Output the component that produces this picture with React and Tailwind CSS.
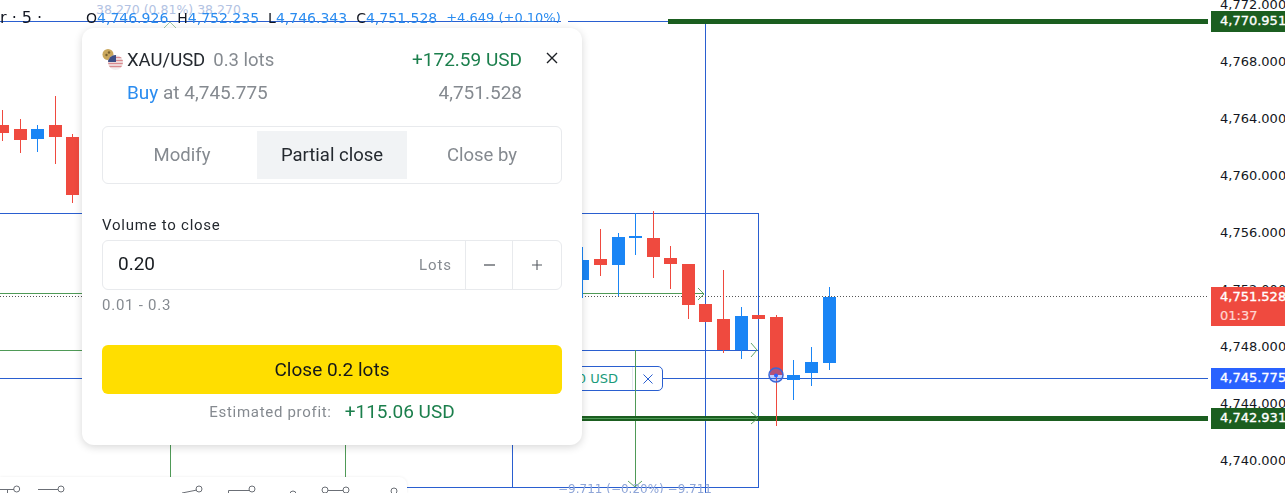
import React from "react";

const R = "#ef4a3f";
const B = "#1a85f5";
const candles = [
  [-4, 125, 133, 110, 141, R], [14, 129, 140, 119, 153, R], [31, 129, 139, 125, 152, B], [49, 125, 137, 96, 164, R], [66, 137, 195, 134, 203, R],
  [576, 260, 280, 247, 298, B], [594, 259, 265, 229, 276, R], [612, 237, 265, 233, 296, B], [629, 236, 238, 213, 255, B], [647, 238, 257, 211, 278, R],
  [664, 258, 264, 246, 289, R], [682, 264, 305, 264, 319, R], [699, 304, 322, 304, 322, R], [717, 319, 350, 270, 353, R], [735, 316, 350, 307, 359, B],
  [752, 315, 319, 315, 319, R], [770, 317, 375, 315, 426, R], [787, 375, 380, 360, 400, B], [805, 362, 373, 347, 386, B], [823, 297, 363, 287, 370, B],
];

function Chart() {
  const blue = "#2a5fd0";
  const green = "#4f9a57";
  const dark = "#1b5e20";
  return (
    <svg className="absolute inset-0" width="1285" height="493" shapeRendering="crispEdges">
      <g stroke={blue} fill="none">
        <path d="M0 21.5H561M568 21.5H668" />
        <path d="M705.5 21V493" />
        <path d="M0 213.5H758.5V487.5H407M512.5 440V487" />
        <path d="M582 350.5H758M0 378.5H90M580 378.5H1208" />
      </g>
      <g stroke={green} fill="none">
        <path d="M0 293.5H704M0 350.5H90M635.5 350V486M170.5 440V478M345.5 440V478" />
      </g>
      <g fill={dark} stroke="none">
        <rect x="668" y="19" width="540" height="5" />
        <rect x="580" y="416" width="628" height="5" />
      </g>
      <path d="M0 296.5H1208" stroke="#555" strokeDasharray="1 2" />
      <path d="M580 418.500H758" stroke={green} />
      <g shapeRendering="auto" stroke={green} fill="none" opacity="0.9">
        <path d="M698 288l6 6-6 6M751 343l6 7-6 7M751 412l7 6-7 6M628 481l7 6 7-6" />
        <path d="M164 28l6-6 6 6" opacity="0.6" />
      </g>
      {candles.map(([x, top, bot, wt, wb, c], i) => (
        <g key={i} fill={c} stroke="none">
          <rect x={x + 6} y={wt} width="1" height={wb - wt} />
          <rect x={x} y={top} width="13" height={bot - top} />
        </g>
      ))}
      <g shapeRendering="auto">
        <circle cx="776" cy="375" r="7" fill="#2962ff" fillOpacity="0.3" stroke="#3a66d8" strokeWidth="1.5" />
        <circle cx="776" cy="375.5" r="2" fill="#2962ff" />
      </g>
    </svg>
  );
}

function PriceLabel({ top, h, bg, children }) {
  return (
    <div
      className="absolute left-[1211px] w-[74px] pl-[9px] overflow-hidden text-[13px] leading-[20px] text-white whitespace-nowrap [-webkit-text-stroke:0.35px_white]"
      style={{ top, height: h, background: bg }}
    >
      {children}
    </div>
  );
}

function Flag() {
  return (
    <svg width="22" height="24" viewBox="0 0 22 24" className="shrink-0">
      <circle cx="6" cy="6.500" r="5.5" fill="#c9a75c" />
      <circle cx="4.500" cy="7" r="1.2" fill="#7a6230" />
      <circle cx="7" cy="4.500" r="1.2" fill="#7a6230" />
      <defs>
        <clipPath id="fc"><circle cx="13.500" cy="14.500" r="7.500" /></clipPath>
      </defs>
      <g clipPath="url(#fc)">
        <rect x="6" y="7" width="15" height="15" fill="#f3eeee" />
        <path d="M6 9.500h15M6 12.500h15M6 15.500h15M6 18.500h15" stroke="#d98a8f" strokeWidth="1.4" />
        <rect x="6" y="7" width="8" height="7" fill="#3d4f86" />
      </g>
    </svg>
  );
}

function Modal() {
  return (
    <div
      className="absolute left-[82px] top-[28px] w-[500px] h-[417px] rounded-xl bg-white shadow-[0_2px_8px_rgba(0,0,0,0.16)] px-5 pt-5 text-[18.5px] leading-6"
      style={{ fontFamily: "Roboto, sans-serif" }}
    >
      <div className="flex items-start h-[78px] relative">
        <div className="w-[25px]"><Flag /></div>
        <div className="flex-1">
          <div className="flex justify-between h-[24px] w-[395px]">
            <div>
              <span className="text-[#24292f]">XAU/USD</span>
              <span className="text-[#858a90] ml-2">0.3 lots</span>
            </div>
            <span className="text-[#1b7f4c] text-[19px]">+172.59 USD</span>
          </div>
          <div className="flex justify-between mt-[9px] w-[395px] text-[#858a90] text-[19px]">
            <div>
              <span className="text-[#2a8cf0]">Buy</span> at 4,745.775
            </div>
            <span>4,751.528</span>
          </div>
        </div>
        <svg width="12" height="12" viewBox="0 0 12 12" className="absolute right-[4px] top-[4px]">
          <path d="M1 1l10 10M11 1L1 11" stroke="#1c1f24" strokeWidth="1.4" />
        </svg>
      </div>

      <div className="flex h-[58px] border border-[#e8eaed] rounded-md p-1 text-center">
        <div className="flex-1 flex items-center justify-center text-[#858a90]">Modify</div>
        <div className="flex-1 flex items-center justify-center text-[#24292f] bg-[#f1f3f5]">Partial close</div>
        <div className="flex-1 flex items-center justify-center text-[#858a90]">Close by</div>
      </div>

      <div className="mt-[31px] text-[15px] leading-5 tracking-[0.75px] text-[#24292f]">Volume to close</div>
      <div className="flex items-center h-[50px] mt-[5px] border border-[#e8eaed] rounded-md">
        <div className="flex-1 pl-[15px] pb-[2px] text-[#181c20] text-[19px]">0.20</div>
        <div className="pr-[13px] text-[15px] tracking-[0.9px] text-[#858a90]">Lots</div>
        <div className="w-[47px] h-full border-l border-[#e8eaed] flex items-center justify-center">
          <svg width="11" height="12" viewBox="0 0 11 12"><path d="M0 6h11" stroke="#555a60" strokeWidth="1.3" /></svg>
        </div>
        <div className="w-[49px] h-full border-l border-[#e8eaed] flex items-center justify-center">
          <svg width="10" height="10" viewBox="0 0 10 10"><path d="M0 5h10M5 0v10" stroke="#555a60" strokeWidth="1.1" /></svg>
        </div>
      </div>
      <div className="mt-[5px] text-[15px] leading-5 tracking-[0.75px] text-[#858a90]">0.01 - 0.3</div>

      <div className="mt-[30px] h-[49px] rounded-md bg-[#ffde00] flex items-center justify-center text-[#14171a] text-[19px]">Close 0.2 lots</div>
      <div className="mt-[6px] flex items-center justify-center gap-[13px]">
        <span className="text-[15px] tracking-[0.7px] text-[#858a90]">Estimated profit:</span>
        <span className="text-[#1b7f4c] text-[19px]">+115.06 USD</span>
      </div>
    </div>
  );
}

function Toolbar() {
  return (
    <div className="absolute left-0 top-[477px] w-[407px] h-[16px] bg-white rounded-tr-lg shadow-[0_0_3px_rgba(0,0,0,0.08)] overflow-hidden">
      <svg width="407" height="16" fill="none" stroke="#6b6f76" strokeWidth="1">
        <path d="M0 12.500H14M7.500 12.500V16" />
        <circle cx="16.700" cy="12" r="3" />
        <path d="M38 12.500H58" />
        <circle cx="61" cy="12" r="3" />
        <path d="M182 16L197 13" />
        <circle cx="199" cy="12" r="3" />
        <path d="M228.500 16V13.500H250" />
        <circle cx="252" cy="12" r="3" />
        <circle cx="293" cy="17" r="3" />
        <circle cx="325" cy="13" r="3" />
        <path d="M328 13.500H343" />
        <circle cx="346" cy="13" r="3" />
        <circle cx="394" cy="14" r="3" />
      </svg>
    </div>
  );
}

const legend = [
  ["O", "4,746.926"],
  ["H", "4,752.235"],
  ["L", "4,746.343"],
  ["C", "4,751.528"],
];

const axis = ["4,772.000", "4,768.000", "4,764.000", "4,760.000", "4,756.000", "4,752.000", "4,748.000", "4,744.000", "4,740.000"];

export default function App() {
  return (
    <div className="relative w-[1285px] h-[493px] overflow-hidden bg-white" style={{ fontFamily: "'DejaVu Sans', sans-serif" }}>
      <Chart />

      <div className="absolute left-[96px] top-[2px] text-[12.500px] leading-4 text-[#9fb4dc] opacity-80 whitespace-nowrap">38.270 (0.81%) 38.270</div>

      <div className="absolute left-0 top-[9px] flex items-center h-[18px] whitespace-nowrap">
        <div className="w-[86px] text-[16px] leading-5 -mt-[1px] text-[#131722]">r · 5 ·</div>
        <div className="flex items-center gap-[9px] text-[14px] leading-[18px] text-[#2a8cf0]">
          {legend.map(([k, v]) => (
            <div key={k}>
              <span className="text-[#131722]">{k}</span>
              {v}
            </div>
          ))}
          <div className="text-[13px]">+4.649 (+0.10%)</div>
        </div>
      </div>

      <div className="absolute left-[558px] top-[481px] text-[12px] leading-4 text-[#8fa6d8] whitespace-nowrap">−9.711 (−0.20%) −9.711</div>

      <div className="absolute left-[540px] top-[366px] w-[123px] h-[25px] flex items-center justify-end rounded-[5px] border border-[#2a5fd0] bg-white">
        <div className="h-full flex items-center pr-[14px] text-[13px] text-[#1a9b7a] whitespace-nowrap">0 USD</div>
        <div className="w-[30px] h-full border-l border-[#e3e6ee] flex items-center justify-center">
          <svg width="10" height="10" viewBox="0 0 10 10"><path d="M0.500 0.500l9 9M9.500 0.500l-9 9" stroke="#2a5fd0" /></svg>
        </div>
      </div>
      <div className="absolute left-[635px] top-[366px] w-px h-[25px] bg-[#4f9a57]" />

      <Toolbar />

      <div className="absolute left-[1220px] top-[-3px] flex flex-col gap-[41px] text-[13px] leading-4 text-[#131722] whitespace-nowrap">
        {axis.map((a) => (
          <div key={a}>{a}</div>
        ))}
      </div>

      <PriceLabel top={11} h={21} bg="#1b5e20">4,770.951</PriceLabel>
      <PriceLabel top={287} h={39} bg="#ef4a3f">
        <div className="leading-[20px]">4,751.528</div>
        <div className="leading-[17px] text-[#ffd6d2] [-webkit-text-stroke:0.2px_#ffd6d2]">01:37</div>
      </PriceLabel>
      <PriceLabel top={368} h={21} bg="#2962ff">4,745.775</PriceLabel>
      <PriceLabel top={408} h={21} bg="#1b5e20">4,742.931</PriceLabel>

      <Modal />
    </div>
  );
}
